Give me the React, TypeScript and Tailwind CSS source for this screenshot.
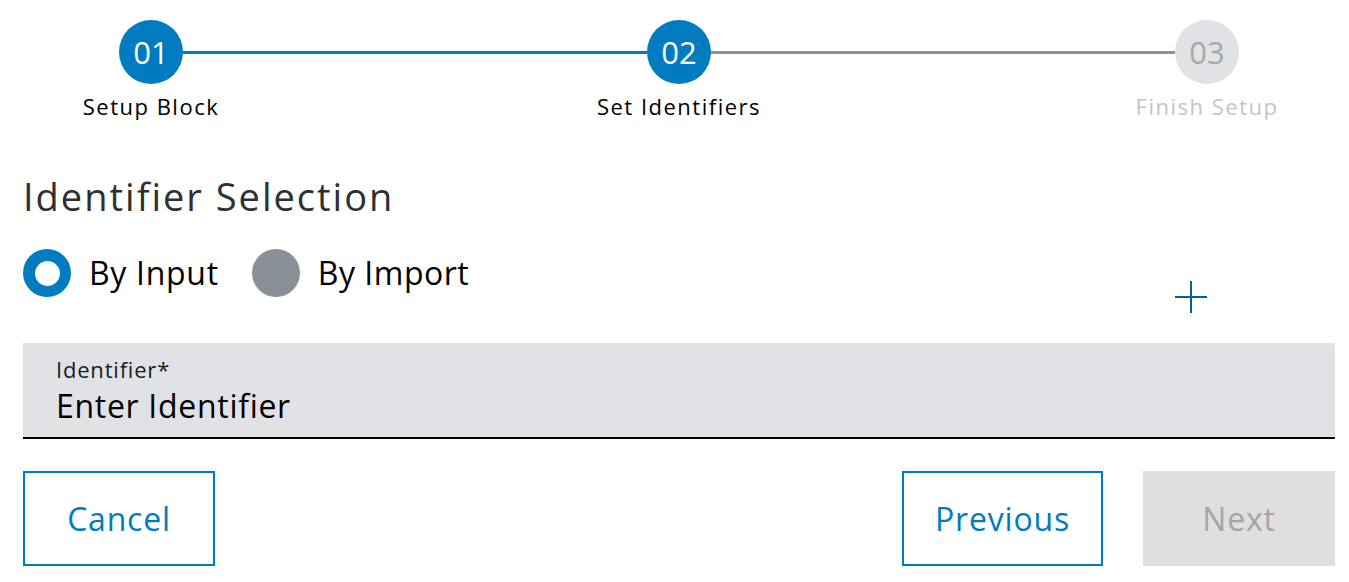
import { useState } from "react";

const steps = [
    { num: "01", label: "Setup Block", state: "done" },
    { num: "02", label: "Set Identifiers", state: "active" },
    { num: "03", label: "Finish Setup", state: "todo" },
];

const StepCircle = ({ num, state }: { num: string; state: string }) => (
    <div
        className={
            "w-16 h-16 rounded-full flex items-center justify-center text-[31px] shrink-0 " +
            (state === "todo" ? "bg-[#e0e2e5] text-[#a4a9b0]" : "bg-[#007bc0] text-white")
        }
    >
        {num}
    </div>
);

export default function App() {
    const [mode, setMode] = useState<"input" | "import">("input");
    const [value, setValue] = useState("");

    return (
        <div
            className="w-[1349px] h-[582px] bg-white pl-[23px] pr-[14px] pt-5 overflow-hidden"
            style={{ fontFamily: '"Open Sans", "Noto Sans", sans-serif' }}
        >
            {/* stepper */}
            <div className="flex items-center px-24">
                <StepCircle num="01" state="done" />
                <div className="flex-1 h-[3px] bg-[#007bc0]" />
                <StepCircle num="02" state="active" />
                <div className="flex-1 h-[3px] bg-[#8a9097]" />
                <StepCircle num="03" state="todo" />
            </div>
            <div className="flex justify-between mt-[8px]">
                {steps.map((s) => (
                    <div
                        key={s.num}
                        className={
                            "w-64 text-center text-[22px] leading-7 tracking-[1.5px] " +
                            (s.state === "todo" ? "text-[#c1c5cb]" : "text-black")
                        }
                    >
                        {s.label}
                    </div>
                ))}
            </div>

            <h1 className="mt-[53px] text-[38px] leading-[46px] text-[#2e3033] tracking-[2px]">
                Identifier Selection
            </h1>

            <div className="flex justify-between h-[72px] mt-[30px]">
                <div className="flex items-start gap-[33px]">
                    <button className="flex items-center gap-[18px]" onClick={() => setMode("input")}>
                        <span
                            className={
                                "w-12 h-12 rounded-full flex items-center justify-center " +
                                (mode === "input" ? "bg-[#007bc0]" : "bg-[#8a9097]")
                            }
                        >
                            {mode === "input" && <span className="w-[25px] h-[25px] rounded-full bg-white" />}
                        </span>
                        <span className="text-[32px] leading-10 tracking-[0.7px] text-black">By Input</span>
                    </button>
                    <button className="flex items-center gap-[18px]" onClick={() => setMode("import")}>
                        <span
                            className={
                                "w-12 h-12 rounded-full flex items-center justify-center " +
                                (mode === "import" ? "bg-[#007bc0]" : "bg-[#8a9097]")
                            }
                        >
                            {mode === "import" && <span className="w-[25px] h-[25px] rounded-full bg-white" />}
                        </span>
                        <span className="text-[32px] leading-10 tracking-[0.5px] text-black">By Import</span>
                    </button>
                </div>
                <button className="self-end w-12 h-12 mr-[120px] flex items-center justify-center text-[#00629a]">
                    <svg width="32" height="32" viewBox="0 0 32 32">
                        <path d="M16 0v32M0 16h32" stroke="currentColor" strokeWidth="2" fill="none" />
                    </svg>
                </button>
            </div>

            <div className="mt-[22px] h-[96px] bg-[#e0e2e5] border-b-2 border-black px-[33px] pt-3">
                <label className="block text-[22px] leading-7 tracking-[0.8px] text-[#1a1c1d]">Identifier*</label>
                <input
                    className="w-full mt-[3px] bg-transparent outline-none text-[32px] leading-[40px] tracking-[0.7px] text-black placeholder:text-black"
                    placeholder="Enter Identifier"
                    value={value}
                    onChange={(e) => setValue(e.target.value)}
                />
            </div>

            <div className="flex justify-between mt-8">
                <button className="w-[192px] h-[95px] border-2 border-[#007bc0] text-[#007bc0] text-[32px] tracking-[0.8px]">
                    Cancel
                </button>
                <div className="flex gap-10">
                    <button className="w-[201px] h-[95px] border-2 border-[#007bc0] text-[#007bc0] text-[32px] tracking-[0.8px]">
                        Previous
                    </button>
                    <button
                        disabled
                        className="w-[192px] h-[95px] bg-[#dfdfdf] text-[#a5a5a5] text-[32px] tracking-[0.8px]"
                    >
                        Next
                    </button>
                </div>
            </div>
        </div>
    );
}
